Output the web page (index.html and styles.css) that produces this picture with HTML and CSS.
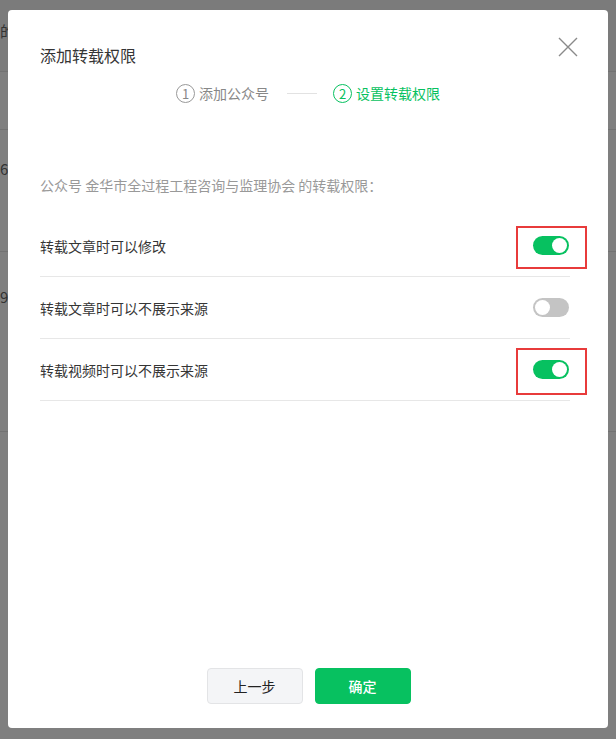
FILE: index.html
```html
<!DOCTYPE html>
<html lang="zh-CN">
<head>
  <meta charset="UTF-8" />
  <meta name="viewport" content="width=device-width, initial-scale=1.0" />
  <title>添加转载权限</title>
  <link rel="stylesheet" href="styles.css">
</head>
<body>
  <div class="page">
    <div class="page-row row-head">的</div>
    <div class="page-row row-sub">&nbsp;</div>
    <div class="page-row row-a">6</div>
    <div class="page-row row-b">9</div>
  </div>

  <div class="mask">
    <div class="dialog">
      <div class="dialog-head">
        <h3 class="dialog-title">添加转载权限</h3>
        <button class="dialog-close" aria-label="关闭">
          <svg width="20" height="20" viewBox="0 0 20 20">
            <path d="M1 1 L19 19 M19 1 L1 19" stroke="#8a8a8a" stroke-width="1.4" fill="none" />
          </svg>
        </button>
      </div>

      <div class="steps">
        <div class="step">
          <span class="step-num">1</span>
          <span class="step-text">添加公众号</span>
        </div>
        <span class="step-line"></span>
        <div class="step current">
          <span class="step-num">2</span>
          <span class="step-text">设置转载权限</span>
        </div>
      </div>

      <div class="dialog-body">
        <p class="desc">公众号 金华市全过程工程咨询与监理协会 的转载权限：</p>
        <ul class="perm-list">
          <li class="perm-item">
            <span>转载文章时可以修改</span>
            <span class="switch on"><i></i><span class="mark mark-a"></span></span>
          </li>
          <li class="perm-item">
            <span>转载文章时可以不展示来源</span>
            <span class="switch"><i></i></span>
          </li>
          <li class="perm-item">
            <span>转载视频时可以不展示来源</span>
            <span class="switch on"><i></i><span class="mark mark-b"></span></span>
          </li>
        </ul>
      </div>

      <div class="dialog-foot">
        <button class="btn btn-default">上一步</button>
        <button class="btn btn-primary">确定</button>
      </div>
    </div>
  </div>
</body>
</html>
```

FILE: styles.css
```css
* {
  box-sizing: border-box;
}
body {
  margin: 0;
  font-family: "Noto Sans CJK SC", "Noto Sans", sans-serif;
  color: #353535;
  background: #fff;
  overflow: hidden;
}

/* page underneath the mask */
.page {
  height: 739px;
}
.page-row {
  border-bottom: 1px solid #e4e4e4;
  font-size: 15px;
  color: #666;
}
.row-head {
  height: 72px;
  padding-top: 20px;
  background: #f6f6f6;
}
.row-sub {
  height: 58px;
}
.row-a {
  height: 122px;
  padding-top: 28px;
}
.row-b {
  height: 180px;
  padding-top: 34px;
}

.mask {
  position: fixed;
  inset: 0;
  background: rgba(0, 0, 0, 0.5);
  padding: 10px 8px 0;
}

.dialog {
  position: relative;
  width: 600px;
  height: 718px;
  background: #fff;
  border-radius: 4px;
  display: flex;
  flex-direction: column;
}
.dialog-head {
  padding: 33px 32px 0;
}
.dialog-title {
  margin: 0;
  font-size: 16px;
  font-weight: normal;
  line-height: 24px;
  color: #353535;
}
.dialog-close {
  position: absolute;
  top: 27px;
  right: 30px;
  padding: 0;
  border: 0;
  background: none;
  width: 20px;
  height: 20px;
}
.dialog-close svg {
  display: block;
}

.steps {
  margin-top: 16px;
  display: flex;
  justify-content: center;
  align-items: center;
  height: 20px;
}
.step {
  display: flex;
  align-items: center;
  gap: 4px;
  color: #888;
  font-size: 14px;
}
.step-num {
  width: 19px;
  height: 19px;
  border: 1px solid #999;
  border-radius: 50%;
  display: flex;
  align-items: center;
  justify-content: center;
  font-size: 13px;
  line-height: 1;
}
.step-line {
  width: 30px;
  height: 1px;
  background: #e2e2e2;
  margin: 0 16px 0 18px;
}
.step.current {
  color: #07c160;
}
.step.current .step-num {
  border-color: #07c160;
}

.dialog-body {
  padding: 72px 38px 0 32px;
}
.desc {
  margin: 0 0 20px;
  font-size: 14px;
  line-height: 20px;
  color: #999;
}
.perm-list {
  list-style: none;
  margin: 0;
  padding: 0;
}
.perm-item {
  height: 62px;
  border-bottom: 1px solid #e7e7e7;
  display: flex;
  justify-content: space-between;
  align-items: center;
  font-size: 14px;
  color: #353535;
}

.switch {
  position: relative;
  width: 36px;
  height: 19px;
  border-radius: 10px;
  background: #c4c4c4;
  margin-right: 1px;
  margin-top: -1px;
}
.switch i {
  position: absolute;
  top: 2px;
  left: 2px;
  width: 15px;
  height: 15px;
  border-radius: 50%;
  background: #fff;
}
.switch.on {
  background: #07c160;
}
.switch.on i {
  left: 19px;
}

/* annotation boxes */
.mark {
  position: absolute;
  border: 2px solid #e83b3b;
  left: -17px;
  width: 71px;
}
.mark-a {
  top: -10px;
  height: 43px;
}
.mark-b {
  top: -12px;
  height: 47px;
}

.dialog-foot {
  margin-top: auto;
  padding-bottom: 24px;
  display: flex;
  justify-content: center;
  gap: 12px;
}
.btn {
  width: 96px;
  height: 36px;
  border-radius: 4px;
  font-family: inherit;
  font-size: 14px;
  cursor: pointer;
}
.btn-default {
  background: #f4f5f7;
  border: 1px solid #e3e4e6;
  color: #222;
  margin-left: 1px;
}
.btn-primary {
  background: #07c160;
  border: 1px solid #07c160;
  color: #fff;
  font-weight: 500;
}
```
